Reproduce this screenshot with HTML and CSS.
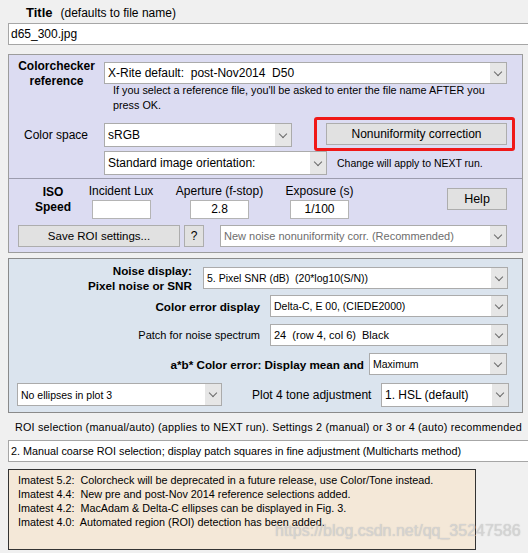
FILE: index.html
```html
<!DOCTYPE html>
<html>
<head>
<meta charset="utf-8">
<title>Colorcheck settings</title>
<link rel="stylesheet" href="styles.css">
</head>
<body>
<div class="page">
  <div class="title-row"><span class="title">Title</span><span class="title-sub">(defaults to file name)</span></div>
  <div class="field title-field">d65_300.jpg</div>

  <div class="panel ref">
    <div class="sec-top">
      <div class="row-a">
        <div class="lbl-cc">Colorchecker<br>reference</div>
        <div class="col-a">
          <div class="dd dd-xrite"><span class="dd-text">X-Rite default:  post-Nov2014  D50</span><span class="dd-btn"></span></div>
          <p class="hint">If you select a reference file, you'll be asked to enter the file name AFTER you<br>press OK.</p>
        </div>
      </div>
      <div class="row-b">
        <div class="lbl-cs">Color space</div>
        <div class="dd dd-srgb"><span class="dd-text">sRGB</span><span class="dd-btn"></span></div>
        <div class="highlight"><button class="btn btn-nonuni">Nonuniformity correction</button></div>
      </div>
      <div class="row-c">
        <div class="dd dd-orient"><span class="dd-text">Standard image orientation:</span><span class="dd-btn"></span></div>
        <span class="note">Change will apply to NEXT run.</span>
      </div>
    </div>
    <div class="sec-iso">
      <div class="row-d">
        <div class="iso-lbl">ISO<br>Speed</div>
        <div class="fcol fc-lux"><div class="flbl">Incident Lux</div><div class="num"></div></div>
        <div class="fcol fc-ap"><div class="flbl">Aperture (f-stop)</div><div class="num">2.8</div></div>
        <div class="fcol fc-exp"><div class="flbl">Exposure (s)</div><div class="num">1/100</div></div>
        <button class="btn btn-help">Help</button>
      </div>
      <div class="row-e">
        <button class="btn btn-save">Save ROI settings...</button>
        <button class="btn btn-q">?</button>
        <div class="dd dd-noise"><span class="dd-text dim">New noise nonuniformity corr. (Recommended)</span><span class="dd-btn"></span></div>
      </div>
    </div>
  </div>

  <div class="panel disp">
    <div class="prow p1">
      <div class="plbl">Noise display:<br>Pixel noise or SNR</div>
      <div class="dd dd-snr"><span class="dd-text small">5. Pixel SNR (dB)  (20*log10(S/N))</span><span class="dd-btn"></span></div>
    </div>
    <div class="prow p2">
      <div class="plbl">Color error display</div>
      <div class="dd dd-cerr"><span class="dd-text small">Delta-C, E 00, (CIEDE2000)</span><span class="dd-btn"></span></div>
    </div>
    <div class="prow p3">
      <div class="plbl">Patch for noise spectrum</div>
      <div class="dd dd-patch"><span class="dd-text small2">24  (row 4, col 6)  Black</span><span class="dd-btn"></span></div>
    </div>
    <div class="prow p4">
      <div class="plbl">a*b* Color error: Display mean and</div>
      <div class="dd dd-max"><span class="dd-text small">Maximum</span><span class="dd-btn"></span></div>
    </div>
    <div class="prow p5">
      <div class="dd dd-ell"><span class="dd-text small">No ellipses in plot 3</span><span class="dd-btn"></span></div>
      <div class="tone-lbl">Plot 4 tone adjustment</div>
      <div class="dd dd-tone"><span class="dd-text">1. HSL (default)</span><span class="dd-btn"></span></div>
    </div>
  </div>

  <p class="roi-lbl">ROI selection (manual/auto) (applies to NEXT run). Settings 2 (manual) or 3 or 4 (auto) recommended</p>
  <div class="field roi-field">2. Manual coarse ROI selection; display patch squares in fine adjustment (Multicharts method)</div>

  <div class="notes">
    <div class="nline">Imatest 5.2:  Colorcheck will be deprecated in a future release, use Color/Tone instead.</div>
    <div class="nline">Imatest 4.4:  New pre and post-Nov 2014 reference selections added.</div>
    <div class="nline">Imatest 4.2:  MacAdam &amp; Delta-C ellipses can be displayed in Fig. 3.</div>
    <div class="nline">Imatest 4.0:  Automated region (ROI) detection has been added.</div>
  </div>

  <div class="watermark">https://blog.csdn.net/qq_35247586</div>
</div>
</body>
</html>
```
FILE: styles.css
```css
* { box-sizing: border-box; }
html, body { margin: 0; padding: 0; }
body {
  width: 528px;
  height: 553px;
  overflow: hidden;
  background: #f0f0f0;
  font-family: "Liberation Sans", Arial, sans-serif;
  font-size: 12px;
  color: #000;
}
.page { position: relative; width: 528px; height: 553px; overflow: hidden; }

.title-row { height: 23px; padding: 3px 0 0 26px; line-height: 20px; white-space: nowrap; }
.title { font-weight: bold; font-size: 13px; }
.title-sub { margin-left: 8px; font-size: 12px; }

.field {
  background: #fff;
  border: 1px solid #a6a6a6;
  height: 22px;
  line-height: 20px;
  padding-left: 2px;
  white-space: pre;
  overflow: hidden;
}
.title-field { margin-left: 8px; width: 540px; }

.panel { margin-left: 8px; width: 515px; border: 1px solid #9c9c9c; }
.ref { margin-top: 9px; background: #dcdcf2; }

.sec-top { height: 124px; border-bottom: 1px solid #9c9cae; padding-top: 7px; }
.row-a { display: flex; align-items: flex-start; }
.lbl-cc { width: 95px; margin-top: -3px; text-align: center; font-weight: bold; line-height: 15px; }

.dd {
  display: flex;
  align-items: stretch;
  background: #fff;
  border: 1px solid #ababab;
  height: 22px;
}
.dd-text {
  flex: 1;
  padding-left: 3px;
  white-space: pre;
  overflow: hidden;
  display: flex;
  align-items: center;
}
.dd-btn {
  width: 16px;
  background: #e6e6e6;
  display: flex;
  align-items: center;
  justify-content: center;
}
.dd-btn::after {
  content: "";
  width: 5px;
  height: 5px;
  border-right: 1px solid #6a6a6a;
  border-bottom: 1px solid #6a6a6a;
  transform: rotate(45deg);
  margin-top: -3px;
}
.dd-xrite { width: 403px; }
.hint { margin: -1px 0 0; padding-left: 9px; font-size: 10.8px; line-height: 15px; white-space: nowrap; }

.row-b { display: flex; align-items: flex-start; margin-top: 4px; }
.lbl-cs { width: 95px; padding-left: 15px; margin-top: 6px; line-height: 24px; white-space: nowrap; }
.dd-srgb { width: 188px; height: 24px; margin-top: 6px; }
.highlight { margin-left: 22px; border: 3px solid #f01818; border-radius: 3px; padding: 3px 5px 3px 9px; }

.btn {
  font-family: inherit;
  font-size: 12px;
  color: #000;
  background: #e1e1e1;
  border: 1px solid #adadad;
  border-radius: 0;
  padding: 0;
  margin: 0;
  height: 22px;
  display: block;
  white-space: nowrap;
}
.btn-nonuni { width: 181px; }

.row-c { display: flex; align-items: center; }
.dd-orient { margin-left: 95px; width: 223px; height: 24px; }
.note { margin-left: 10px; font-size: 10.5px; white-space: nowrap; }

.sec-iso { height: 73px; padding-top: 5px; }
.row-d { display: flex; align-items: flex-start; height: 35px; }
.iso-lbl { margin-left: 12px; width: 64px; margin-top: 1px; text-align: center; font-weight: bold; line-height: 15px; }
.fcol { display: flex; flex-direction: column; align-items: center; }
.flbl { line-height: 15px; white-space: nowrap; }
.num {
  margin-top: 1px;
  height: 19px;
  width: 59px;
  background: #fff;
  border: 1px solid #b4b4b4;
  text-align: center;
  line-height: 17px;
}
.fc-lux { width: 72px; }
.fc-ap { width: 125px; }
.fc-exp { width: 75px; }
.btn-help { margin-left: 90px; margin-top: 4px; width: 60px; font-size: 12.5px; }

.row-e { display: flex; margin-top: 6px; }
.btn-save { margin-left: 9px; width: 162px; font-size: 11.5px; }
.btn-q { margin-left: 4px; width: 20px; }
.dd-noise { margin-left: 16px; width: 287px; }
.dim { color: #6d6d6d; font-size: 11px; }

.disp { margin-top: 5px; background: #dbe4ee; height: 155px; border-color: #8a8a8a; padding-top: 4px; }
.prow { display: flex; align-items: center; }
.plbl { text-align: right; font-weight: bold; line-height: 15px; white-space: nowrap; font-size: 11.7px; }
.p1 { height: 30px; }
.p1 .plbl { width: 183px; }
.dd-snr { margin-left: 11px; width: 305px; }
.p2 { margin-top: 2px; height: 22px; }
.p2 .plbl, .p3 .plbl { width: 251px; }
.dd-cerr, .dd-patch { margin-left: 10px; width: 238px; }
.p3 { margin-top: 7px; height: 22px; }
.p3 .plbl { font-weight: normal; font-size: 11px; }
.p4 { margin-top: 7px; height: 22px; }
.p4 .plbl { width: 355px; }
.dd-max { margin-left: 5px; width: 138px; }
.p5 { margin-top: 8px; height: 23px; }
.dd-ell { margin-left: 8px; width: 205px; height: 23px; }
.tone-lbl { margin-left: 30px; width: 129px; white-space: nowrap; }
.dd-tone { width: 128px; height: 24px; }
.small { font-size: 10.5px; }
.small2 { font-size: 11px; }

.roi-lbl { margin: 7px 0 0; padding-left: 15px; line-height: 15px; white-space: nowrap; font-size: 10.8px; letter-spacing: 0.2px; }
.roi-field { margin-top: 5px; margin-left: 8px; width: 540px; font-size: 10.8px; }

.notes {
  margin-top: 7px;
  margin-left: 8px;
  width: 468px;
  height: 81px;
  background: #f4e8d8;
  border: 1px solid #333;
  padding: 3px 0 0 9px;
  line-height: 14px;
  font-size: 10.8px;
}
.nline { white-space: pre; }

.watermark {
  position: absolute;
  left: 275px;
  top: 521px;
  font-size: 16px;
  line-height: 20px;
  color: rgba(215, 215, 215, 0.85);
  text-shadow: 0 0 1px rgba(140, 140, 140, 0.5);
  white-space: nowrap;
}
```
